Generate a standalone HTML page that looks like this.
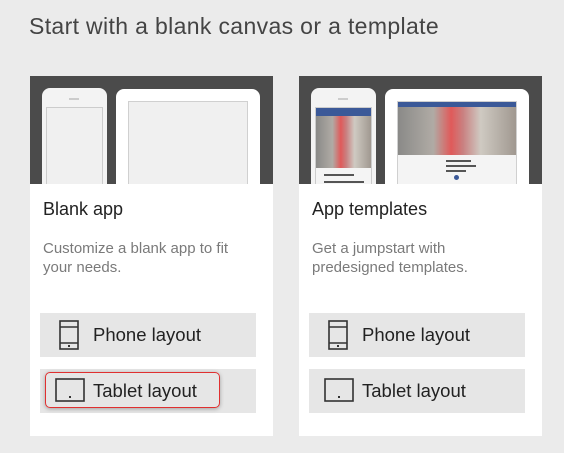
<!DOCTYPE html>
<html><head><style>
body{margin:0;width:564px;height:453px;background:#ebebeb;font-family:"Segoe UI","Liberation Sans",sans-serif;position:relative;overflow:hidden}
.t{position:absolute;left:29px;top:13px;font-size:23px;color:#444;letter-spacing:0.35px}
.card{position:absolute;top:76px;width:243px;height:360px;background:#fff}
.hd{position:absolute;left:0;top:0;width:100%;height:108px;background:#4b4b4b;overflow:hidden}
.ph{position:absolute;left:12px;top:12px;width:65px;height:110px;background:#f3f3f3;border-radius:8px}
.ph .s{position:absolute;left:4px;right:4px;top:19px;bottom:0;background:#f0f0f0;border:1px solid #ccc}
.tb{position:absolute;left:86px;top:13px;width:144px;height:110px;background:#fff;border-radius:8px}
.tb .s{position:absolute;left:12px;right:12px;top:12px;bottom:0;background:#f0f0f0;border:1px solid #d0d0d0}
.h{position:absolute;left:13px;top:123px;font-size:18px;color:#222}
.d{position:absolute;left:13px;top:163px;font-size:15px;line-height:19px;color:#7a7a7a;width:215px}
.b{position:absolute;left:10px;width:216px;height:44px;background:#e6e6e6;font-size:18.5px;color:#222}
.b span{position:absolute;left:53px;top:11px}
.b svg{position:absolute}
.bar{position:absolute;background:#3b5998}
.pic{position:absolute;background:linear-gradient(90deg,#8a8a88 0%,#b0aba5 30%,#e05a5a 45%,#c98080 55%,#cfcac2 70%,#a09890 100%)}
</style></head><body>
<div class="t">Start with a blank canvas or a template</div>

<div class="card" style="left:30px">
 <div class="hd">
  <div class="ph"><div style="position:absolute;left:27px;top:10px;width:10px;height:2px;background:#ccc"></div><div class="s"></div></div>
  <div class="tb"><div class="s"></div></div>
 </div>
 <div class="h">Blank app</div>
 <div class="d">Customize a blank app to fit your needs.</div>
 <div class="b" style="top:237px"><svg style="left:19px;top:7px" width="20" height="30"><rect x="1" y="1" width="18" height="28" fill="none" stroke="#333" stroke-width="1.6"/><line x1="1" y1="7" x2="19" y2="7" stroke="#333" stroke-width="1.4"/><line x1="1" y1="23" x2="19" y2="23" stroke="#333" stroke-width="1.4"/><rect x="9" y="25" width="2" height="2" fill="#333"/></svg><span>Phone layout</span></div>
 <div class="b" style="top:293px"><div style="position:absolute;left:5px;top:3px;width:173px;height:34px;border:1.5px solid #e03030;border-radius:5px;box-shadow:0 1px 4px rgba(0,0,0,.3)"></div><svg style="left:15px;top:9px" width="30" height="24"><rect x="1" y="1" width="28" height="22" fill="none" stroke="#333" stroke-width="1.6"/><rect x="14" y="18" width="2" height="2" fill="#333"/></svg><span>Tablet layout</span></div>
</div>

<div class="card" style="left:299px">
 <div class="hd">
  <div class="ph"><div style="position:absolute;left:27px;top:10px;width:10px;height:2px;background:#ccc"></div><div class="s" style="background:#f4f4f4">
   <div class="bar" style="left:0;right:0;top:0;height:8px"></div>
   <div class="pic" style="left:0;right:0;top:8px;height:52px"></div>
   <div style="position:absolute;left:8px;top:66px;width:30px;height:2px;background:#555"></div>
   <div style="position:absolute;left:8px;top:73px;width:40px;height:2px;background:#555"></div>
   <div style="position:absolute;left:8px;top:80px;width:30px;height:2px;background:#555"></div>
  </div></div>
  <div class="tb"><div class="s" style="background:#f4f4f4">
   <div class="bar" style="left:0;right:0;top:0;height:5px"></div>
   <div class="pic" style="left:0;right:0;top:5px;height:48px"></div>
   <div style="position:absolute;left:48px;top:58px;width:25px;height:2px;background:#555"></div>
   <div style="position:absolute;left:48px;top:63px;width:30px;height:2px;background:#555"></div>
   <div style="position:absolute;left:48px;top:68px;width:20px;height:2px;background:#555"></div>
   <div style="position:absolute;left:56px;top:73px;width:5px;height:5px;border-radius:3px;background:#3b5998"></div>
  </div></div>
 </div>
 <div class="h">App templates</div>
 <div class="d" style="width:200px">Get a jumpstart with predesigned templates.</div>
 <div class="b" style="top:237px"><svg style="left:19px;top:7px" width="20" height="30"><rect x="1" y="1" width="18" height="28" fill="none" stroke="#333" stroke-width="1.6"/><line x1="1" y1="7" x2="19" y2="7" stroke="#333" stroke-width="1.4"/><line x1="1" y1="23" x2="19" y2="23" stroke="#333" stroke-width="1.4"/><rect x="9" y="25" width="2" height="2" fill="#333"/></svg><span>Phone layout</span></div>
 <div class="b" style="top:293px"><svg style="left:15px;top:9px" width="30" height="24"><rect x="1" y="1" width="28" height="22" fill="none" stroke="#333" stroke-width="1.6"/><rect x="14" y="18" width="2" height="2" fill="#333"/></svg><span>Tablet layout</span></div>
</div>
</body></html>
